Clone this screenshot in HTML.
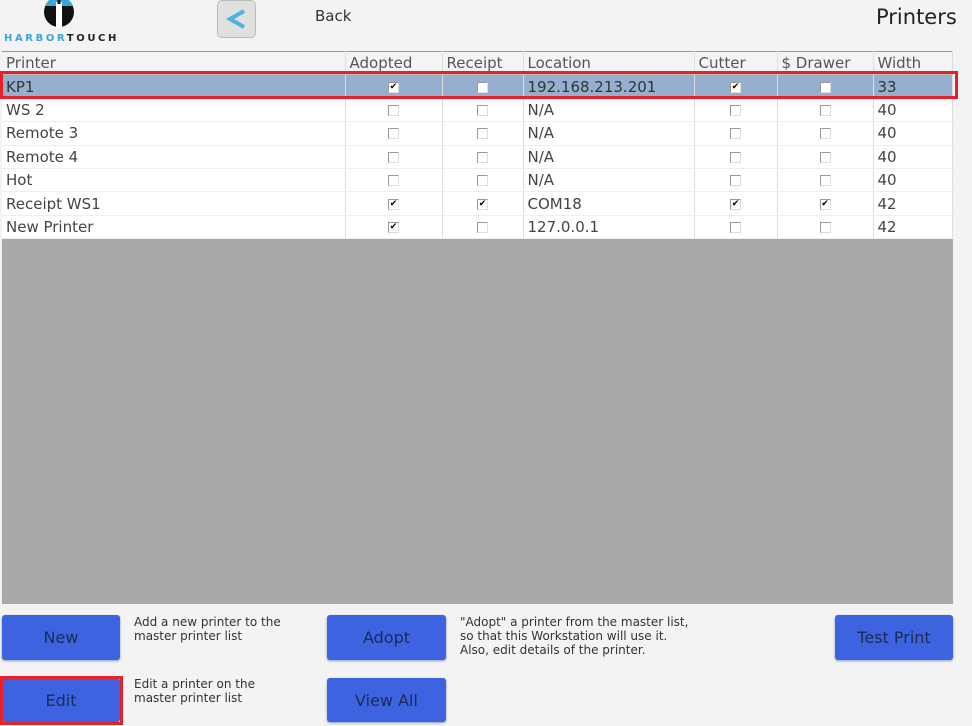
<!DOCTYPE html>
<html><head><style>
body{margin:0;width:972px;height:726px;background:#f3f3f3;font-family:"DejaVu Sans","Liberation Sans",sans-serif;position:relative;overflow:hidden;color:#333}
.a{position:absolute}
table{position:absolute;left:2px;top:51px;width:951px;border-collapse:collapse;font-size:15px;background:#fff}
tr{height:23.4px}
td{padding:0 4px;border-right:1px solid #ddd;border-bottom:1px solid #eee;color:#444;white-space:nowrap;box-sizing:border-box}
tr.h td{background:#f4f4f4;border-bottom:1px solid #bbb;border-top:1px solid #999;color:#555}
tr.s td{background:#95afcf;color:#333}
td.c{text-align:center}
.cb{display:inline-block;width:9px;height:9px;border:1px solid #999;border-right-color:#ddd;border-bottom-color:#ddd;background:#fff;font-size:9px;line-height:9px;text-align:center;color:#000;vertical-align:middle}
.btn{position:absolute;background:#3d63e0;border-radius:3px;color:#1c2a55;font-size:16px;display:flex;align-items:center;justify-content:center;box-shadow:0 1px 2px #8899bb}
.d{position:absolute;font-size:12px;line-height:14px;color:#333}
</style></head><body>
<svg class="a" style="left:40px;top:0" width="40" height="30" viewBox="0 0 40 30"><circle cx="19" cy="12" r="15" fill="#111"/><path d="M5 6 A15 15 0 0 1 33 6 Z" fill="#3aa6db"/><rect x="16" y="2" width="6" height="26" fill="#fff"/><rect x="17.5" y="0" width="3" height="4" fill="#111"/></svg>
<div class="a" style="left:4px;top:33px;font-size:10px;font-weight:bold;letter-spacing:2.6px;color:#3aa6db">HARBOR<span style="color:#222">TOUCH</span></div>
<div class="a" style="left:217px;top:0;width:37px;height:36px;background:#e0e0e0;border:1px solid #bbb;border-radius:5px"><svg width="37" height="36"><path d="M26 10 L12 18 L26 26" stroke="#4ab3e0" stroke-width="4" fill="none"/></svg></div>
<div class="a" style="left:315px;top:7px;font-size:15px;color:#333">Back</div>
<div class="a" style="left:876px;top:5px;font-size:21px;color:#222">Printers</div>
<div class="a" style="left:2px;top:238px;width:951px;height:366px;background:#a9a9a9"></div>
<table>
<colgroup><col style="width:343px"><col style="width:97px"><col style="width:81px"><col style="width:171px"><col style="width:83px"><col style="width:96px"><col></colgroup>
<tr class="h"><td>Printer</td><td>Adopted</td><td>Receipt</td><td>Location</td><td>Cutter</td><td>$ Drawer</td><td>Width</td></tr>
<tr class="s"><td>KP1</td><td class="c"><span class="cb">✔</span></td><td class="c"><span class="cb"></span></td><td>192.168.213.201</td><td class="c"><span class="cb">✔</span></td><td class="c"><span class="cb"></span></td><td>33</td></tr>
<tr><td>WS 2</td><td class="c"><span class="cb"></span></td><td class="c"><span class="cb"></span></td><td>N/A</td><td class="c"><span class="cb"></span></td><td class="c"><span class="cb"></span></td><td>40</td></tr>
<tr><td>Remote 3</td><td class="c"><span class="cb"></span></td><td class="c"><span class="cb"></span></td><td>N/A</td><td class="c"><span class="cb"></span></td><td class="c"><span class="cb"></span></td><td>40</td></tr>
<tr><td>Remote 4</td><td class="c"><span class="cb"></span></td><td class="c"><span class="cb"></span></td><td>N/A</td><td class="c"><span class="cb"></span></td><td class="c"><span class="cb"></span></td><td>40</td></tr>
<tr><td>Hot</td><td class="c"><span class="cb"></span></td><td class="c"><span class="cb"></span></td><td>N/A</td><td class="c"><span class="cb"></span></td><td class="c"><span class="cb"></span></td><td>40</td></tr>
<tr><td>Receipt WS1</td><td class="c"><span class="cb">✔</span></td><td class="c"><span class="cb">✔</span></td><td>COM18</td><td class="c"><span class="cb">✔</span></td><td class="c"><span class="cb">✔</span></td><td>42</td></tr>
<tr><td>New Printer</td><td class="c"><span class="cb">✔</span></td><td class="c"><span class="cb"></span></td><td>127.0.0.1</td><td class="c"><span class="cb"></span></td><td class="c"><span class="cb"></span></td><td>42</td></tr>
</table>
<div class="a" style="left:0;top:71px;width:952px;height:22px;border:3px solid #e8202a"></div>
<div class="btn" style="left:2px;top:615px;width:118px;height:45px">New</div>
<div class="d" style="left:134px;top:615px">Add a new printer to the<br>master printer list</div>
<div class="btn" style="left:327px;top:615px;width:119px;height:45px">Adopt</div>
<div class="d" style="left:460px;top:615px">"Adopt" a printer from the master list,<br>so that this Workstation will use it.<br>Also, edit details of the printer.</div>
<div class="btn" style="left:835px;top:615px;width:118px;height:45px">Test Print</div>
<div class="btn" style="left:2px;top:678px;width:118px;height:44px">Edit</div>
<div class="a" style="left:0;top:676px;width:117px;height:43px;border:3px solid #e8202a"></div>
<div class="d" style="left:134px;top:677px">Edit a printer on the<br>master printer list</div>
<div class="btn" style="left:327px;top:678px;width:119px;height:44px">View All</div>
</body></html>
